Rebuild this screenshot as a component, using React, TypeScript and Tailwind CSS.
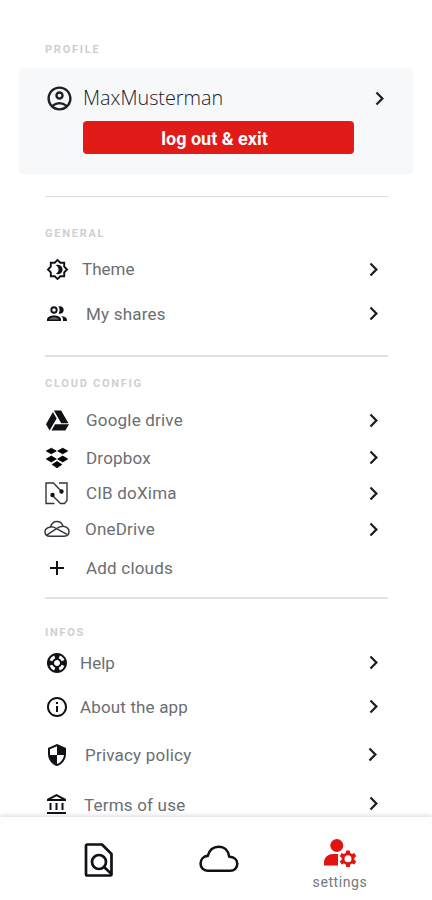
import React from 'react';
import {
  MdAdd,
  MdChevronRight,
  MdOutlineAccountBalance,
  MdOutlineAccountCircle,
  MdOutlineBrightness4,
  MdOutlineInfo,
  MdOutlineSupport,
  MdSecurity,
} from 'react-icons/md';
import { FaGoogleDrive } from 'react-icons/fa';

const SharesIcon: React.FC = () => (
  <svg width="22" height="18" viewBox="0 0 22 18" fill="#101116">
    <circle cx="8" cy="5" r="2.700" fill="none" stroke="#101116" strokeWidth="1.900" />
    <path d="M12.500 1.600c2.500-1 5.200.7 5.200 3.400s-2.700 4.400-5.200 3.400c1.500-2 1.500-4.800 0-6.800z" />
    <path d="M1 16v-1.500c0-2.600 4-4 7-4s7 1.400 7 4V16z" />
    <path d="M3 14.600c.6-1.300 3-2.300 5-2.300s4.400 1 5 2.300z" fill="#6b6e72" />
    <path d="M15.300 10.900c3 .5 5.700 1.700 5.700 3.900V16h-4v-1.700c0-1.400-.7-2.500-1.700-3.400z" />
  </svg>
);

const DropboxIcon: React.FC = () => (
  <svg width="24" height="22" viewBox="0 0 24 22" fill="#000" stroke="#000" strokeWidth="0.800" strokeLinejoin="round">
    <path d="m6.300 1.200 5 2.800-5 2.800-5-2.800z" />
    <path d="m17.700 1.200 5 2.800-5 2.800-5-2.800z" />
    <path d="m6.300 9 5 3-5 3-5-3z" />
    <path d="m17.700 9 5 3-5 3-5-3z" />
    <path d="m12 14.500 4.800 3-4.800 3.300-4.800-3.300z" />
  </svg>
);

const DoximaIcon: React.FC = () => (
  <svg width="24" height="24" viewBox="0 0 24 24" fill="none" stroke="#33363b" strokeWidth="1.400">
    <path d="M9.500 22.500H1V2h7.500l8 8.500" />
    <path d="M14 2h8v17.500l-2.500 3h-4L7.500 14.500" />
    <circle cx="16.500" cy="10.500" r="1.500" fill="#111" stroke="#111" />
    <circle cx="7.500" cy="14" r="1.500" fill="#111" stroke="#111" />
  </svg>
);

const OneDriveIcon: React.FC = () => (
  <svg width="26" height="18" viewBox="0 0 26 18" className="shrink-0" fill="none" stroke="#33363b" strokeWidth="1.500" strokeLinejoin="round">
    <path d="M6 16.300C2.800 16.300 1 14.300 1 11.800c0-2.700 2.300-4.400 5.500-4.900C7.600 3.500 9.800 1.500 12.800 1.500c3 0 5.300 1.600 6.200 4.700 3.600.5 6 2.600 6 5.400 0 2.900-2 4.700-5 4.700z" />
    <path d="M6.500 6.900c2.200-.2 3.800.3 5.500 1.400l11 6M3 14.800l9.500-6.200C14.200 7.400 16.200 6.300 19 6.200" />
  </svg>
);

const FindIcon: React.FC = () => (
  <svg width="30" height="36" viewBox="0 0 30 36" fill="none" stroke="#101116" strokeWidth="2.700" strokeLinejoin="round">
    <path d="M3.500 2.500H18L27.500 12v20.500a1 1 0 0 1-1 1h-23a1.500 1.500 0 0 1-1.500-1.500V4a1.500 1.500 0 0 1 1.500-1.500z" />
    <circle cx="15" cy="20" r="7" />
    <path d="m20 25 7 6.500" />
  </svg>
);

const CloudIcon: React.FC = () => (
  <svg width="40" height="28" viewBox="0 0 40 28" fill="none" stroke="#101116" strokeWidth="2.600" strokeLinejoin="round">
    <path d="M8.500 25.800C4.500 25.800 1.600 22.700 1.600 18.500c0-4.100 2.900-7.300 7.200-7.600C10.300 5.200 14.500 1.800 19.700 1.800c5.700 0 9.800 4 10.500 9.900 4.600.1 8.100 2.900 8.100 7.100 0 4-3 7-7 7z" />
  </svg>
);

const UserGearIcon: React.FC = () => (
  <svg width="34" height="30" viewBox="0 0 34 30" fill="#e2140f">
    <circle cx="13.800" cy="7.500" r="6.500" />
    <path d="M1 27.500v-3.200c0-5 4.200-8.300 9.500-8.300H15v11.500z" />
    <path
      fillRule="evenodd"
      d="m23.200 12.500h3.600l.5 2.500 1.700 1 2.400-.9 1.800 3.100-1.900 1.600v2l1.900 1.600-1.800 3.100-2.400-.9-1.700 1-.5 2.500h-3.600l-.5-2.500-1.700-1-2.400.9-1.800-3.100 1.900-1.600v-2l-1.900-1.600 1.800-3.100 2.400.9 1.700-1zM25 17.300a3.500 3.500 0 1 0 0 7 3.500 3.500 0 0 0 0-7z"
    />
  </svg>
);

type Item = {
  label: string;
  icon: React.ReactNode;
  row: string;
  text: string;
  arrow?: string;
};

const general: Item[] = [
  { label: 'Theme', icon: <MdOutlineBrightness4 size={23} />, row: 'h-11', text: 'ml-[13px]' },
  { label: 'My shares', icon: <SharesIcon />, row: 'h-[46px]', text: 'ml-[17px] tracking-[0.200px]', arrow: 'pb-0.5' },
];

const clouds: Item[] = [
  { label: 'Google drive', icon: <FaGoogleDrive size={23} />, row: 'h-[38px]', text: 'ml-[17px] tracking-[0.200px]' },
  { label: 'Dropbox', icon: <DropboxIcon />, row: 'h-[38px]', text: 'ml-[17px] tracking-[0.200px]', arrow: 'pb-0.5' },
  { label: 'CIB doXima', icon: <DoximaIcon />, row: 'h-8', text: 'ml-[17px] tracking-[0.200px]' },
  { label: 'OneDrive', icon: <OneDriveIcon />, row: 'h-10', text: 'ml-4 tracking-[0.200px]' },
  { label: 'Add clouds', icon: <MdAdd size={26} />, row: 'h-[38px]', text: 'ml-[17px] tracking-[0.200px]' },
];

const infos: Item[] = [
  { label: 'Help', icon: <MdOutlineSupport size={24} />, row: 'h-[42px]', text: 'ml-[11px]', arrow: 'pb-0.5' },
  { label: 'About the app', icon: <MdOutlineInfo size={24} />, row: 'h-[46px]', text: 'ml-[11px] tracking-[0.150px]', arrow: 'pb-0.5' },
  { label: 'Privacy policy', icon: <MdSecurity size={24} />, row: 'h-[50px]', text: 'ml-4 tracking-[0.200px]', arrow: 'pb-0.5 pr-px' },
  { label: 'Terms of use', icon: <MdOutlineAccountBalance size={24} />, row: 'h-[50px]', text: 'ml-[15px] tracking-[0.200px]', arrow: 'pb-1' },
];

const Heading: React.FC<{ children: string }> = ({ children }) => (
  <h2 className="h-4 text-[11px] leading-4 font-bold tracking-[1.750px] text-[#cbcfd6]">{children}</h2>
);

const Rows: React.FC<{ items: Item[] }> = ({ items }) => (
  <ul>
    {items.map((item) => (
      <li key={item.label} className={`flex items-center ${item.row}`}>
        <span className="flex w-6 shrink-0 justify-center text-[#101116]">{item.icon}</span>
        <span className={`flex-1 text-[17px] leading-5 text-[#6b6e72] ${item.text}`}>{item.label}</span>
        {item.label !== 'Add clouds' && (
          <MdChevronRight size={27} className={`mr-px box-content text-[#1c2026] ${item.arrow ?? ''}`} />
        )}
      </li>
    ))}
  </ul>
);

const App: React.FC = () => {
  return (
    <div className="flex h-[900px] w-[432px] flex-col overflow-hidden bg-white font-['Roboto','Liberation_Sans',sans-serif]">
      <main className="h-[817px] shrink-0 overflow-hidden">
        <div className="pt-[42px] pl-[45px]">
          <Heading>PROFILE</Heading>
        </div>

        <section className="mx-[19px] mt-2.5 h-[106px] rounded bg-[#f6f8fa]">
          <div className="flex h-[53px] items-center pt-[7px] pl-[26px]">
            <MdOutlineAccountCircle size={29} className="text-[#1c2026]" />
            <span className="ml-[9px] flex-1 font-['Open_Sans','Noto_Sans',sans-serif] text-[19.800px] font-light text-[#1c2026]">
              MaxMusterman
            </span>
            <MdChevronRight size={27} className="mr-5 text-[#1c2026]" />
          </div>
          <button className="ml-16 flex h-[33px] w-[271px] items-center justify-center rounded-sm bg-[#e01b18] pt-0.5 pr-2 text-lg font-bold text-white">
            log out &amp; exit
          </button>
        </section>

        <div className="mr-11 ml-[45px]">
          <hr className="mt-[22px] h-px border-0 bg-[#d9dde1]" />
          <div className="mt-[29px]">
            <Heading>GENERAL</Heading>
          </div>
          <div className="mt-[5px]">
            <Rows items={general} />
          </div>

          <hr className="mt-[18px] h-0.5 border-0 bg-[#dfe2e5]" />
          <div className="mt-[19px]">
            <Heading>CLOUD CONFIG</Heading>
          </div>
          <div className="mt-[9px]">
            <Rows items={clouds} />
          </div>

          <hr className="mt-2.5 h-0.5 border-0 bg-[#e2e4e7]" />
          <div className="mt-[26px]">
            <Heading>INFOS</Heading>
          </div>
          <div className="mt-px">
            <Rows items={infos} />
          </div>
        </div>
      </main>

      <nav className="relative flex h-[83px] shrink-0 bg-white shadow-[0_-1px_5px_rgba(0,0,0,0.160)]">
        <div className="flex w-[198px] shrink-0 justify-center pt-[25px]">
          <FindIcon />
        </div>
        <div className="flex w-[42px] shrink-0 justify-center pt-7">
          <CloudIcon />
        </div>
        <div className="flex flex-1 flex-col items-center pt-[21px] pl-2">
          <UserGearIcon />
          <span className="mt-1 text-sm leading-5 tracking-[0.600px] text-[#74777b]">settings</span>
        </div>
      </nav>
    </div>
  );
};

export default App;
